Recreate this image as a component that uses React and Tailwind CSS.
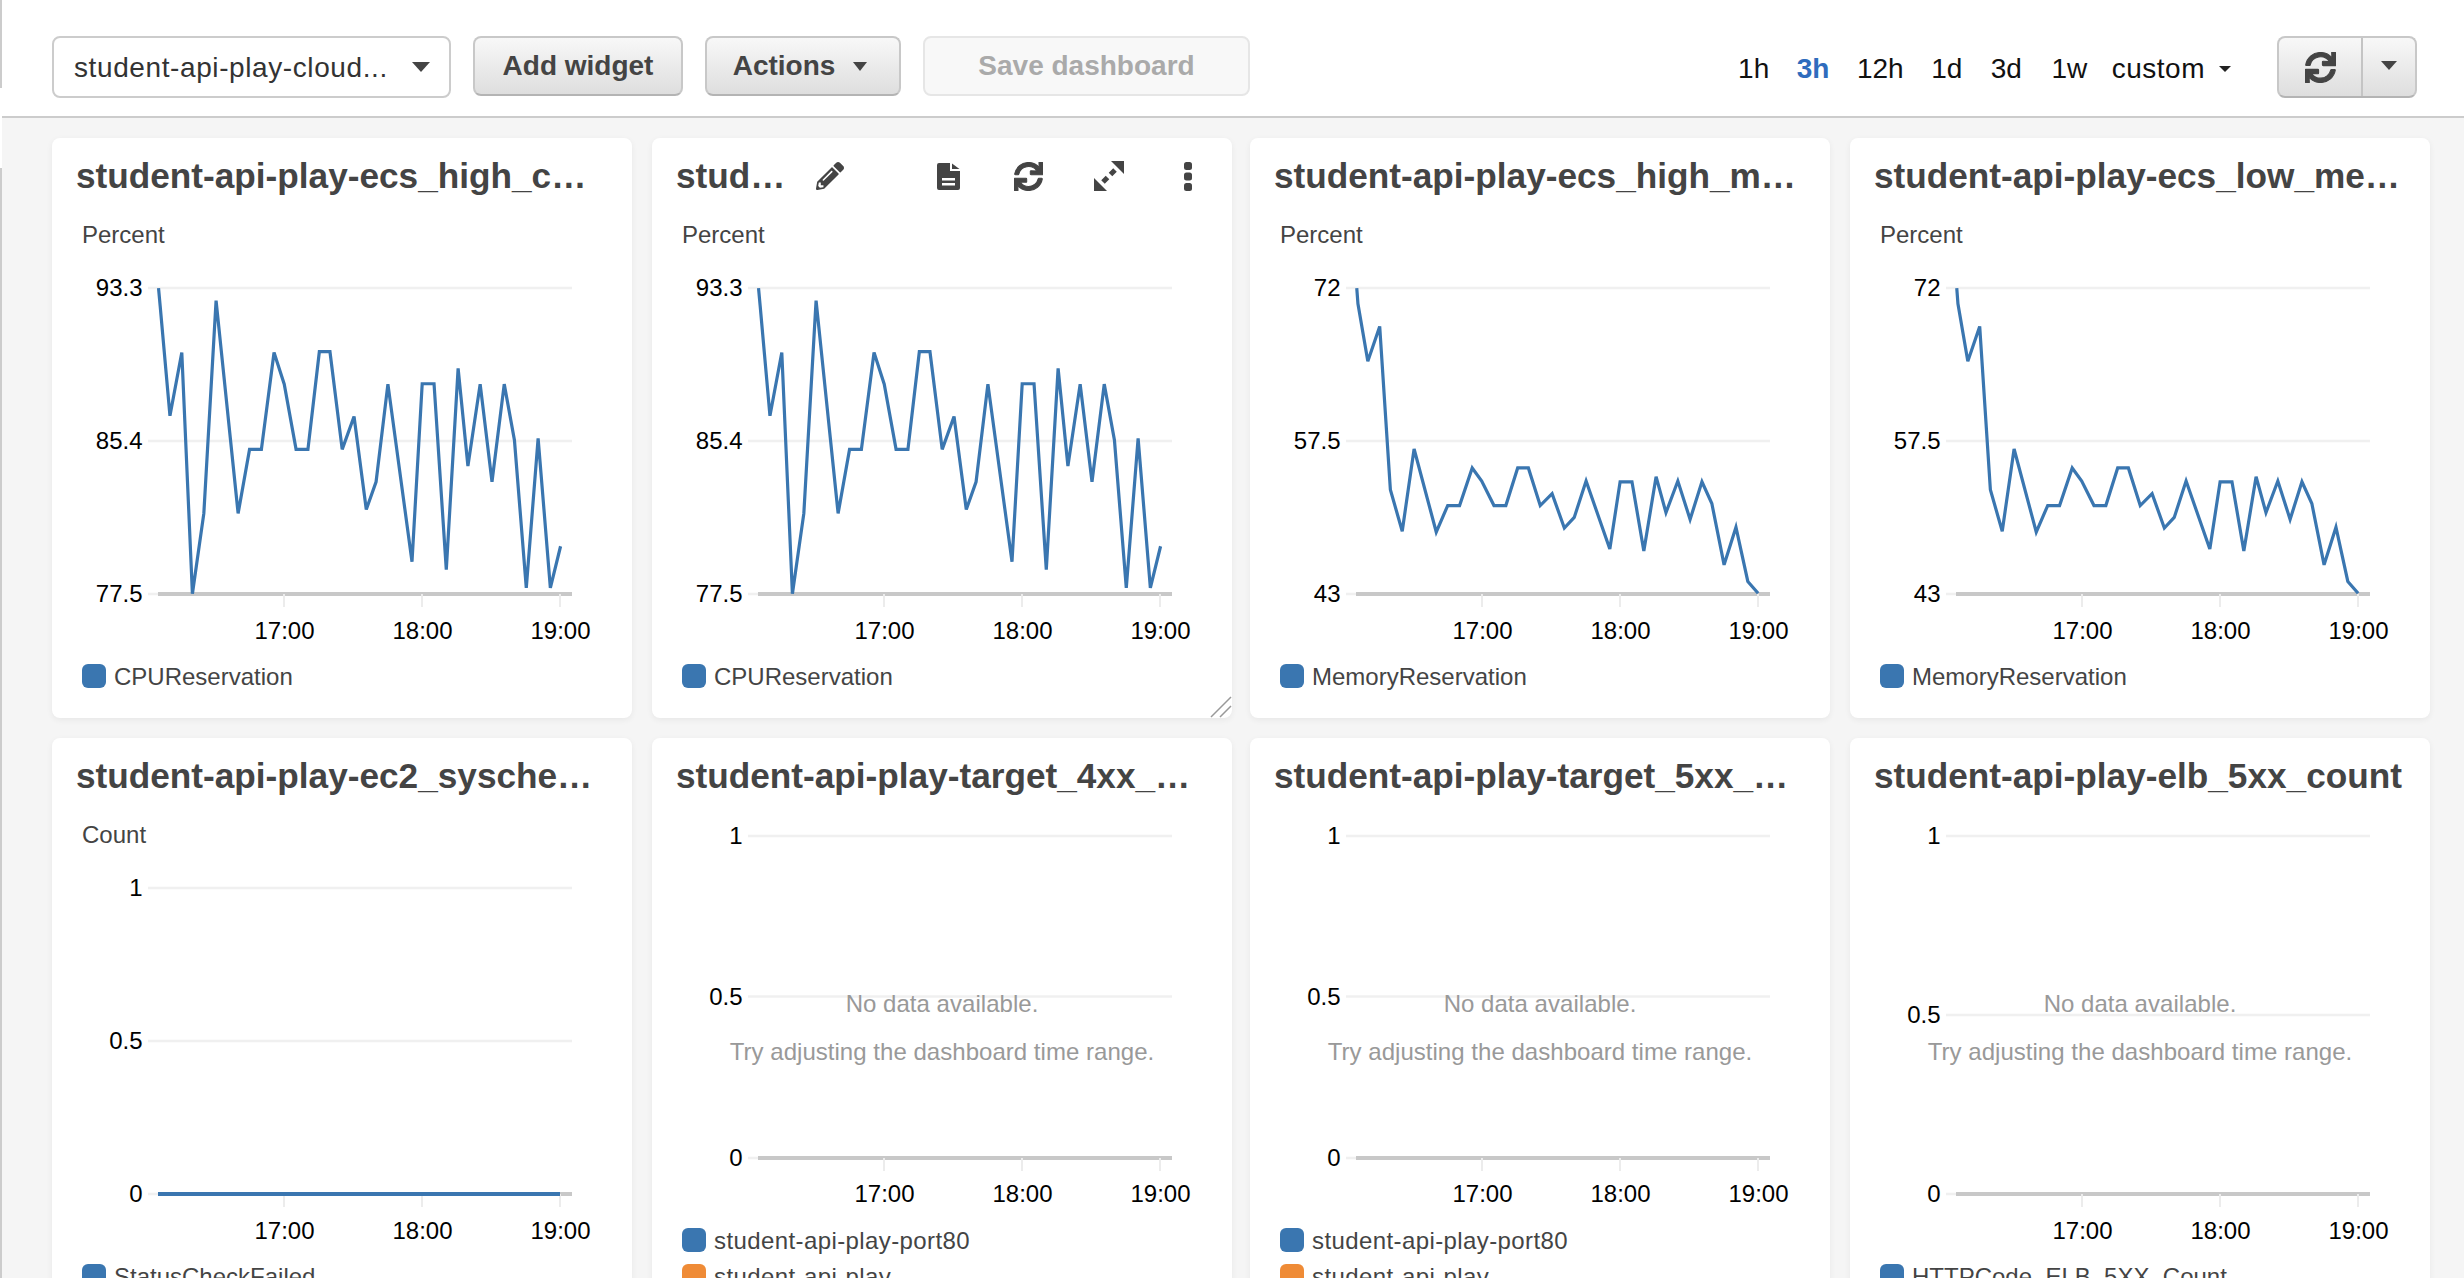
import React from "react";
import { FaPencilAlt, FaSync } from "react-icons/fa";

const cpuRaw = [[388,425],[392,470],[416,748],[445,588],[471,1198],[499,995],[529,457],[583,995],[611,833],[640,833],[671,588],[696,668],[725,833],[754,833],[782,586],[808,586],[838,833],[867,750],[897,985],[921,915],[950,668],[1009,1117],[1034,667],[1063,667],[1093,1137],[1122,628],[1146,875],[1176,668],[1205,915],[1235,668],[1260,810],[1289,1183],[1318,805],[1348,1183],[1373,1078]];
const memRaw = [[295,425],[298,465],[323,610],[353,522],[380,935],[410,1040],[440,832],[496,1042],[525,975],[555,975],[587,880],[611,913],[642,975],[672,975],[702,880],[729,880],[759,975],[789,945],[820,1032],[845,1005],[875,913],[935,1085],[961,915],[991,915],[1021,1090],[1052,902],[1077,993],[1107,913],[1138,1010],[1168,915],[1193,970],[1224,1125],[1254,1030],[1284,1167],[1310,1197]];
const cpu = cpuRaw.map(([x, y]) => [(x - 127) / 2.45, y / 2.529 - 18]);
const mem = memRaw.map(([x, y]) => [(x - 25) / 2.529, y / 2.529 - 18]);
const flat = [[106, 456], [508, 456]];

const BLUE = "#3a76b0";
const ORANGE = "#ef8b36";

function Chart({ top, height, grid, labels, labelY, series }) {
  const base = grid[2];
  return (
    <svg width="580" height={height} viewBox={`0 ${top} 580 ${height}`} className="block shrink-0" style={{ fontFamily: '"Liberation Sans", Arial, sans-serif' }}>
      {grid.map((y) => (
        <line key={y} x1="96" x2="520" y1={y} y2={y} stroke="#f0f0f0" strokeWidth="2.5" />
      ))}
      <line x1="106" x2="520" y1={base} y2={base} stroke="#c8c8c8" strokeWidth="4" />
      {[232, 370, 508].map((x) => (
        <line key={x} x1={x} x2={x} y1={base} y2={base + 13} stroke="#ececec" strokeWidth="2" />
      ))}
      {labels.map((t, i) => (
        <text key={t} x="90.5" y={grid[i] + 8} textAnchor="end" fontSize="24" fill="#000">{t}</text>
      ))}
      {[["17:00", 232.5], ["18:00", 370.5], ["19:00", 508.5]].map(([t, x]) => (
        <text key={t} x={x} y={labelY + 7.5} textAnchor="middle" fontSize="24" fill="#000">{t}</text>
      ))}
      {series && (
        <polyline points={series.map((p) => p.join(",")).join(" ")} fill="none" stroke={BLUE} strokeWidth={series === flat ? 4 : 3.2} strokeLinejoin="miter" />
      )}
    </svg>
  );
}

function Legend({ items }) {
  return (
    <div className="flex flex-col pl-[30px]">
      {items.map(([name, color, wide]) => (
        <div key={name} className="flex h-[36px] items-center gap-2 text-[24px] whitespace-nowrap text-[#444]">
          <span className="h-6 w-6 shrink-0 rounded-md" style={{ backgroundColor: color }} />
          <span className={wide ? "pt-[2px] tracking-[0.4px]" : "pt-[2px]"}>{name}</span>
        </div>
      ))}
    </div>
  );
}

function NoData() {
  return (
    <div className="absolute left-0 top-[248px] flex w-full flex-col items-center text-[24px] tracking-[0.03px] text-[#999]">
      <div className="h-[36px] leading-[36px]">No data available.</div>
      <div className="mt-3 h-[36px] leading-[36px]">Try adjusting the dashboard time range.</div>
    </div>
  );
}

function Title({ children }) {
  return <div className="flex h-[76px] items-center pl-6 text-[35.2px] font-bold whitespace-nowrap text-[#444]">{children}</div>;
}

function Unit({ children }) {
  return <div className="flex h-[42px] items-center pl-[30px] text-[24px] text-[#444]">{children}</div>;
}

function Card({ children }) {
  return <div className="relative h-[580px] w-[580px] overflow-hidden rounded-lg bg-white shadow-[0_2px_6px_rgba(0,0,0,0.06)]">{children}</div>;
}

function FileIcon() {
  return (
    <svg width="23" height="27" viewBox="0 0 23 27" fill="#444">
      <path fillRule="evenodd" d="M2 0h11v8h10v17a2 2 0 0 1-2 2H2a2 2 0 0 1-2-2V2a2 2 0 0 1 2-2zM5 15v2.5h13V15zM5 20v2.5h13V20z" />
      <path d="M15 0.5 22.5 6H15z" />
    </svg>
  );
}

function ExpandIcon() {
  return (
    <svg width="30" height="30" viewBox="0 0 30 30" fill="#444">
      <path d="M17 0h13v13z" />
      <path d="M0 17v13h13z" />
      <path d="M21 9 16.5 13.5M9 21 13.5 16.5" stroke="#444" strokeWidth="5" fill="none" />
    </svg>
  );
}

function DotsIcon() {
  return (
    <svg width="8" height="29" viewBox="0 0 8 29" fill="#444">
      <rect x="0" y="0" width="8" height="8" rx="2.5" />
      <rect x="0" y="10.5" width="8" height="8" rx="2.5" />
      <rect x="0" y="21" width="8" height="8" rx="2.5" />
    </svg>
  );
}

const btn = "flex h-[60px] items-center justify-center rounded-lg border-2 border-[#c8c8c8] border-b-[#b4b4b4] bg-gradient-to-b from-[#f8f8f8] to-[#dedede] text-[28px] font-bold text-[#444]";

export default function App() {
  return (
    <div className="relative h-screen overflow-hidden bg-[#f5f5f5]" style={{ fontFamily: '"Liberation Sans", Arial, sans-serif' }}>
      <div className="absolute left-0 top-0 z-10 h-[88px] w-[2px] bg-[#ccc]" />
      <div className="absolute left-0 top-[88px] z-10 h-[80px] w-[2px] bg-white" />
      <div className="absolute bottom-0 left-0 top-[168px] z-10 w-[2px] bg-[#ccc]" />

      <header className="flex h-[118px] items-start border-b-2 border-[#ccc] bg-white pl-[52px] pr-[47px] pt-9">
        <div className="flex h-[62px] w-[399px] items-center justify-between rounded-lg border-2 border-[#ccc] bg-white pl-[20px] pr-[19px] text-[28px] text-[#333]">
          <span className="whitespace-nowrap pt-[2px] tracking-[0.6px]">student-api-play-cloud...</span>
          <span className="h-0 w-0 border-x-[9px] border-t-[10px] border-x-transparent border-t-[#444]" />
        </div>
        <button className={`${btn} ml-[22px] w-[210px]`}>Add widget</button>
        <button className={`${btn} ml-[22px] w-[196px] gap-[18px] pr-[6px]`}>
          <span>Actions</span>
          <span className="h-0 w-0 border-x-[7.5px] border-t-[9px] border-x-transparent border-t-[#444]" />
        </button>
        <button className="ml-[22px] flex h-[60px] w-[327px] items-center justify-center rounded-lg border-2 border-[#e6e6e6] bg-[#f8f8f8] text-[28px] font-bold text-[#aaa]">Save dashboard</button>

        <div className="ml-auto flex h-[62px] items-center gap-[27.5px] pt-1 text-[28px] text-[#111]">
          <span>1h</span>
          <span className="font-bold text-[#2f6cbd]">3h</span>
          <span>12h</span>
          <span>1d</span>
          <span className="ml-[1px]">3d</span>
          <span className="ml-[2px]">1w</span>
          <span className="-ml-[3px] flex items-center gap-[14px] tracking-[0.5px]">
            custom
            <span className="h-0 w-0 border-x-[6px] border-t-[6px] border-x-transparent border-t-[#222]" />
          </span>
        </div>
        <div className="ml-[46px] flex h-[62px] w-[140px] rounded-lg border-2 border-[#c8c8c8] border-b-[#b4b4b4] bg-gradient-to-b from-[#f8f8f8] to-[#dedede]">
          <div className="flex w-[84px] items-center justify-center border-r-2 border-[#c4c4c4] text-[#444]">
            <FaSync size={31} stroke="currentColor" strokeWidth={18} />
          </div>
          <div className="flex flex-1 items-center justify-center pb-[4px]">
            <span className="h-0 w-0 border-x-[8.5px] border-t-[9px] border-x-transparent border-t-[#444]" />
          </div>
        </div>
      </header>

      <main className="grid grid-cols-[600px_598px_600px_580px] gap-y-5 pl-[52px] pt-5">
        <Card>
          <Title>student-api-play-ecs_high_c…</Title>
          <Unit>Percent</Unit>
          <Chart top={118} height={402} grid={[150, 303, 456]} labels={["93.3", "85.4", "77.5"]} labelY={493} series={cpu} />
          <Legend items={[["CPUReservation", BLUE]]} />
        </Card>

        <Card>
          <div className="flex h-[76px] items-center pl-6 text-[35.2px] font-bold whitespace-nowrap text-[#444]">
            <span className="w-[140px]">stud…</span>
            <FaPencilAlt size={28} color="#444" />
            <span className="ml-[93px]"><FileIcon /></span>
            <span className="ml-[54px] text-[#444]"><FaSync size={29} stroke="currentColor" strokeWidth={18} /></span>
            <span className="ml-[51px]"><ExpandIcon /></span>
            <span className="ml-[60px]"><DotsIcon /></span>
          </div>
          <Unit>Percent</Unit>
          <Chart top={118} height={402} grid={[150, 303, 456]} labels={["93.3", "85.4", "77.5"]} labelY={493} series={cpu} />
          <Legend items={[["CPUReservation", BLUE]]} />
          <svg className="absolute bottom-0 right-0" width="22" height="22" viewBox="0 0 22 22" stroke="#999" strokeWidth="1.5" fill="none">
            <path d="M1 21 21 1M10 21 21 10" />
          </svg>
        </Card>

        <Card>
          <Title>student-api-play-ecs_high_m…</Title>
          <Unit>Percent</Unit>
          <Chart top={118} height={402} grid={[150, 303, 456]} labels={["72", "57.5", "43"]} labelY={493} series={mem} />
          <Legend items={[["MemoryReservation", BLUE]]} />
        </Card>

        <Card>
          <Title>student-api-play-ecs_low_me…</Title>
          <Unit>Percent</Unit>
          <Chart top={118} height={402} grid={[150, 303, 456]} labels={["72", "57.5", "43"]} labelY={493} series={mem} />
          <Legend items={[["MemoryReservation", BLUE]]} />
        </Card>

        <Card>
          <Title>student-api-play-ec2_sysche…</Title>
          <Unit>Count</Unit>
          <Chart top={118} height={402} grid={[150, 303, 456]} labels={["1", "0.5", "0"]} labelY={493} series={flat} />
          <Legend items={[["StatusCheckFailed", BLUE]]} />
        </Card>

        <Card>
          <Title>student-api-play-target_4xx_…</Title>
          <Chart top={76} height={408} grid={[98, 258.5, 420]} labels={["1", "0.5", "0"]} labelY={456} />
          <Legend items={[["student-api-play-port80", BLUE, true], ["student-api-play", ORANGE, true]]} />
          <NoData />
        </Card>

        <Card>
          <Title>student-api-play-target_5xx_…</Title>
          <Chart top={76} height={408} grid={[98, 258.5, 420]} labels={["1", "0.5", "0"]} labelY={456} />
          <Legend items={[["student-api-play-port80", BLUE, true], ["student-api-play", ORANGE, true]]} />
          <NoData />
        </Card>

        <Card>
          <Title>student-api-play-elb_5xx_count</Title>
          <Chart top={76} height={444} grid={[98, 277, 456]} labels={["1", "0.5", "0"]} labelY={493} />
          <Legend items={[["HTTPCode_ELB_5XX_Count", BLUE]]} />
          <NoData />
        </Card>
      </main>
    </div>
  );
}
